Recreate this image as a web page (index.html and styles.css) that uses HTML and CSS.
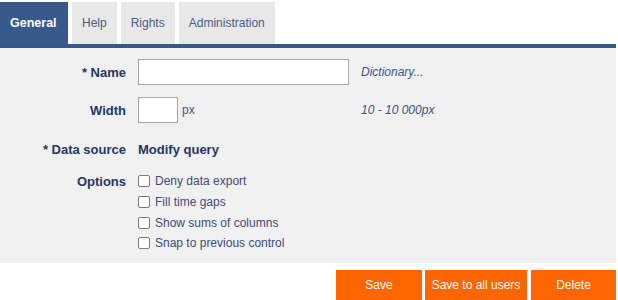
FILE: index.html
```html
<!DOCTYPE html>
<html lang="en">
<head>
    <meta charset="UTF-8">
    <title>Control settings</title>
    <link rel="stylesheet" href="styles.css">
</head>
<body>
    <div class="tabs">
        <div class="tab active">General</div>
        <div class="tab">Help</div>
        <div class="tab">Rights</div>
        <div class="tab">Administration</div>
    </div>
    <div class="tab-bar"></div>

    <div class="panel">
        <div class="form">
            <label class="label">* Name</label>
            <div class="field"><input type="text" class="input input-wide"></div>
            <div class="hint">Dictionary...</div>

            <label class="label">Width</label>
            <div class="field"><input type="text" class="input input-small"><span class="unit">px</span></div>
            <div class="hint">10 - 10 000px</div>

            <label class="label">* Data source</label>
            <div class="field"><a class="link">Modify query</a></div>
            <div></div>
        </div>

        <div class="options">
            <div class="label options-label">Options</div>
            <div class="checks">
                <label class="check"><input type="checkbox"> Deny data export</label>
                <label class="check"><input type="checkbox"> Fill time gaps</label>
                <label class="check"><input type="checkbox"> Show sums of columns</label>
                <label class="check"><input type="checkbox"> Snap to previous control</label>
            </div>
        </div>
    </div>

    <div class="buttons">
        <button class="btn btn-save">Save</button>
        <button class="btn btn-all">Save to all users</button>
        <button class="btn btn-delete">Delete</button>
    </div>
</body>
</html>
```

FILE: styles.css
```css
body {
    margin: 0;
    background: #ffffff;
    font-family: "Liberation Sans", Arial, sans-serif;
    font-size: 12px;
    color: #1f3864;
}
.tabs {
    display: flex;
    gap: 4px;
    padding-top: 2px;
    height: 42px;
}
.tab {
    display: flex;
    align-items: center;
    padding: 0 10px;
    background: #e8e8e8;
    color: #4a5a80;
}
.tab.active {
    background: #37598c;
    color: #ffffff;
    font-weight: bold;
    font-size: 12.5px;
}
.tab:first-child {
    width: 48px;
}
.tab-bar {
    height: 4px;
    width: 616px;
    background: #36578b;
}
.panel {
    width: 616px;
    height: 215px;
    background: #f0f0f0;
    box-sizing: border-box;
    padding-top: 11px;
}
.form {
    display: grid;
    grid-template-columns: 126px 211px auto;
    grid-template-rows: 26px 26px 26px;
    column-gap: 12px;
    row-gap: 12px;
    align-items: center;
}
.form > :nth-child(n+7) {
    margin-top: 2px;
}
.label {
    text-align: right;
    font-weight: bold;
    font-size: 13px;
    color: #1f3864;
}
.field {
    display: flex;
    align-items: center;
}
.input {
    height: 26px;
    box-sizing: border-box;
    border: 1px solid #a8a8a8;
    background: #ffffff;
    margin: 0;
    padding: 2px 4px;
}
.input-wide {
    width: 211px;
}
.input-small {
    width: 40px;
}
.unit {
    margin-left: 4px;
    color: #46568a;
}
.hint {
    font-style: italic;
    color: #3a5288;
}
.link {
    font-weight: bold;
    font-size: 13px;
    color: #1f3864;
}
.options {
    display: flex;
    gap: 12px;
    margin-top: 10px;
}
.options-label {
    width: 126px;
    line-height: 21px;
}
.checks {
    display: flex;
    flex-direction: column;
}
.check {
    display: flex;
    align-items: center;
    height: 20.7px;
    color: #3e4c7c;
}
.check input {
    appearance: none;
    width: 12px;
    height: 12px;
    margin: 0 5px 0 0;
    border: 1px solid #7a7a7a;
    border-radius: 2px;
    background: #ffffff;
}
.buttons {
    display: flex;
    justify-content: flex-end;
    gap: 3px;
    width: 616px;
    margin-top: 7px;
}
.btn {
    height: 30px;
    border: none;
    background: #ff6600;
    color: #ffffff;
    font-family: "Liberation Sans", Arial, sans-serif;
    font-size: 12px;
    padding: 0;
}
.btn-save {
    width: 86px;
}
.btn-all {
    width: 102px;
}
.btn-delete {
    width: 85px;
    margin-left: 1px;
}
```
